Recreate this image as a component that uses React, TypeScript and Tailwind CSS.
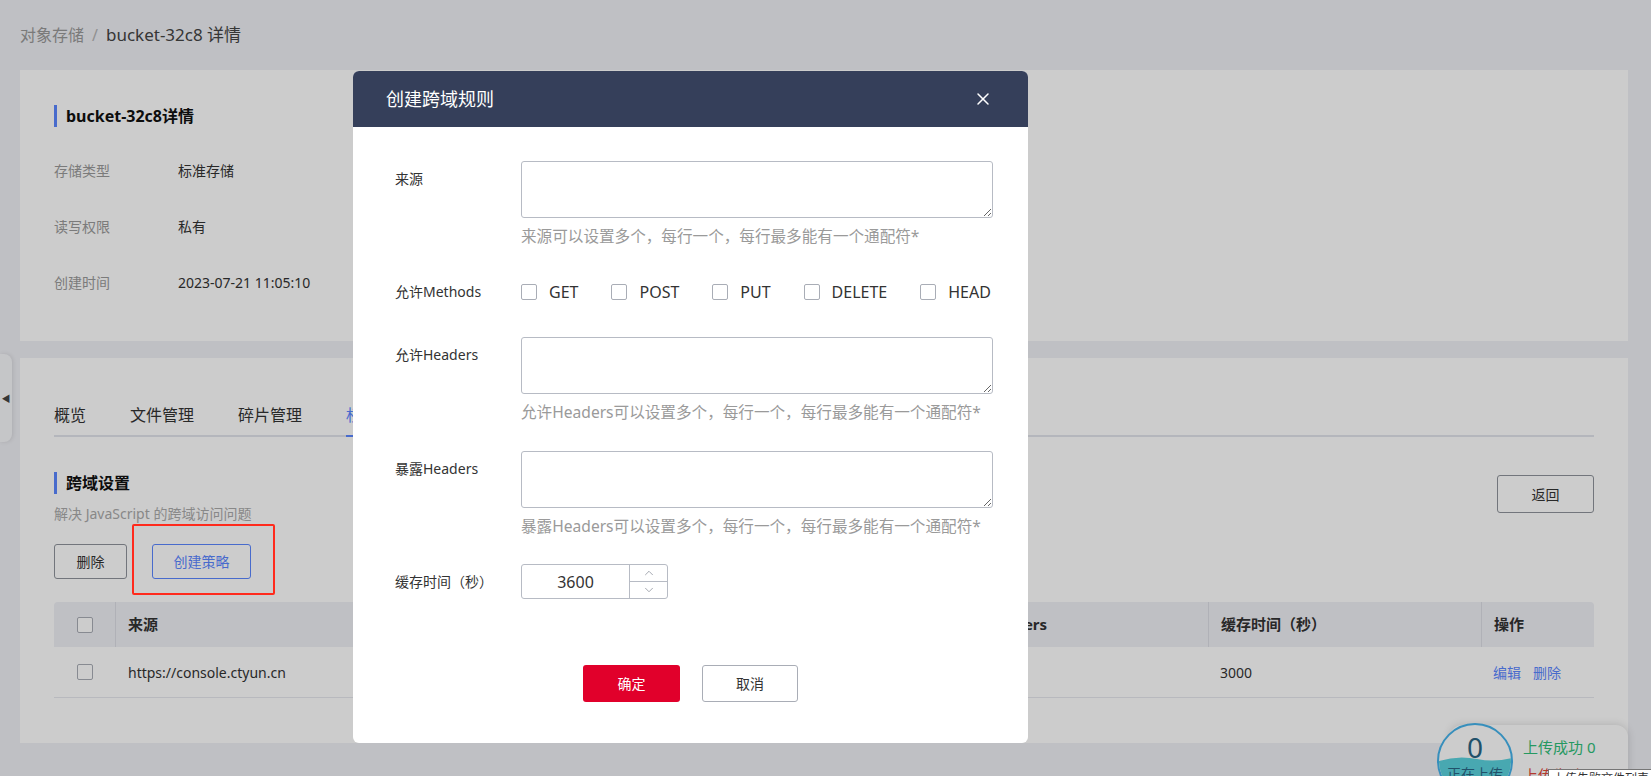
import { X, ChevronUp, ChevronDown } from "lucide-react"

const tabs = ["概览", "文件管理", "碎片管理", "权限管理"]

const infoRows = [
  { label: "存储类型", value: "标准存储" },
  { label: "读写权限", value: "私有" },
  { label: "创建时间", value: "2023-07-21 11:05:10" },
]

const methods = ["GET", "POST", "PUT", "DELETE", "HEAD"]

const columns = "grid grid-cols-[62px_275px_275px_277px_265px_273px_113px]"

const Box = () => (
  <span className="block h-4 w-4 shrink-0 rounded-[2px] border border-[#a9adb6] bg-white" />
)

const SectionTitle = ({ children }: { children: React.ReactNode }) => (
  <div className="flex h-[22px] items-center">
    <span className="h-[22px] w-[3px] bg-[#5b86ff]" />
    <span className="ml-[9px] text-[16px] font-bold leading-[22px] text-[#111]">{children}</span>
  </div>
)

const FieldLabel = ({ children, top }: { children: React.ReactNode; top?: boolean }) => (
  <div className={`text-[14px] leading-[20px] text-[#333] ${top ? "pt-[8px]" : ""}`}>{children}</div>
)

const TextField = ({ hint }: { hint: string }) => (
  <div>
    <textarea className="block h-[57px] w-full rounded-[3px] border border-[#b7bbc4] bg-white outline-none" />
    <div className="mt-[7px] text-[15.6px] leading-[22px] text-[#9a9a9a]">{hint}</div>
  </div>
)

const CorsDialog = () => (
  <div className="absolute left-[353px] top-[71px] z-50 w-[675px] overflow-hidden rounded-[6px] bg-white">
    <div className="flex h-[56px] items-center justify-between bg-[#353f5a] pl-[33px] pr-[35px]">
      <span className="text-[18px] text-white">创建跨域规则</span>
      <X size={20} strokeWidth={1.8} className="text-white" />
    </div>

    <div className="grid grid-cols-[126px_1fr] pl-[42px] pr-[35px] pt-[34px]">
      <FieldLabel top>来源</FieldLabel>
      <TextField hint="来源可以设置多个，每行一个，每行最多能有一个通配符*" />

      <div className="mt-[34px] flex h-[22px] items-center">
        <FieldLabel>允许Methods</FieldLabel>
      </div>
      <div className="mt-[34px] flex h-[22px] items-center gap-[33px]">
        {methods.map((m) => (
          <label key={m} className="flex items-center gap-[12px] text-[16px] text-[#333]">
            <Box />
            {m}
          </label>
        ))}
      </div>

      <div className="mt-[34px]">
        <FieldLabel top>允许Headers</FieldLabel>
      </div>
      <div className="mt-[34px]">
        <TextField hint="允许Headers可以设置多个，每行一个，每行最多能有一个通配符*" />
      </div>

      <div className="mt-[28px]">
        <FieldLabel top>暴露Headers</FieldLabel>
      </div>
      <div className="mt-[28px]">
        <TextField hint="暴露Headers可以设置多个，每行一个，每行最多能有一个通配符*" />
      </div>

      <div className="mt-[27px] flex h-[35px] items-center">
        <FieldLabel>缓存时间（秒）</FieldLabel>
      </div>
      <div className="mt-[27px] flex h-[35px] w-[147px] rounded-[3px] border border-[#b7bbc4]">
        <div className="flex flex-1 items-center justify-center text-[16px] text-[#333]">3600</div>
        <div className="flex w-[38px] flex-col border-l border-[#b7bbc4] text-[#8a8f99]">
          <div className="flex flex-1 items-center justify-center border-b border-[#b7bbc4]">
            <ChevronUp size={14} strokeWidth={1.3} />
          </div>
          <div className="flex flex-1 items-center justify-center">
            <ChevronDown size={14} strokeWidth={1.3} />
          </div>
        </div>
      </div>
    </div>

    <div className="mt-[66px] flex justify-center gap-[22px] pb-[41px]">
      <button className="h-[37px] w-[97px] rounded-[3px] bg-[#e1002b] text-[14px] text-white">确定</button>
      <button className="h-[37px] w-[96px] rounded-[3px] border border-[#a9adb6] bg-white text-[14px] text-[#333]">
        取消
      </button>
    </div>
  </div>
)

const UploadWidget = () => (
  <>
    <div className="absolute left-[1450px] top-[725px] h-[80px] w-[178px] rounded-t-[12px] bg-white shadow-[0_0_8px_rgba(0,0,0,0.15)]">
      <div className="pl-[73px] pt-[11px] text-[15px] leading-[22px] text-[#2fc07a]">上传成功 0</div>
      <div className="pl-[73px] pt-[6px] text-[15px] leading-[22px] text-[#e0493a]">上传失败 0</div>
    </div>
    <div className="absolute left-[1437px] top-[723px] h-[76px] w-[76px] overflow-hidden rounded-full border-2 border-[#45b3ec] bg-white">
      <div className="pt-[5px] text-center text-[28px] leading-[34px] text-[#2a6685]">0</div>
      <svg className="absolute left-0 top-[30px]" width="76" height="50" viewBox="0 0 76 50">
        <path d="M0 6 Q19 0 38 4 T76 2 V50 H0 Z" fill="#5ad3de" />
      </svg>
      <div className="absolute left-0 top-[38px] w-full text-center text-[14px] text-[#2a6685]">正在上传</div>
    </div>
  </>
)

export default function App() {
  return (
    <div className="relative h-screen w-full overflow-hidden bg-[#eff0f5] font-['Noto_Sans','Noto_Sans_CJK_SC',sans-serif] text-[#333]">
      <div className="flex h-[70px] items-center pl-5 text-[16px]">
        <span className="text-[#999]">对象存储</span>
        <span className="mx-[8px] text-[#b5b5b5]">/</span>
        <span className="text-[17px] text-[#444]">bucket-32c8 详情</span>
      </div>

      <div className="ml-5 mr-[23px] h-[271px] bg-white pl-[34px] pt-[35px]">
        <SectionTitle>bucket-32c8详情</SectionTitle>
        <div className="mt-[15px]">
          {infoRows.map((row) => (
            <div key={row.label} className="flex h-[56px] items-center text-[14px]">
              <span className="w-[124px] text-[#9a9a9a]">{row.label}</span>
              <span className="text-[#333]">{row.value}</span>
            </div>
          ))}
        </div>
      </div>

      <div className="ml-5 mr-[23px] mt-[17px] h-[385px] bg-white px-[34px] pt-[37px]">
        <div className="flex gap-[44px] border-b-2 border-[#e2e4eb]">
          {tabs.map((t, i) => (
            <div
              key={t}
              className={`relative flex h-[40px] items-center text-[16px] ${i === 3 ? "text-[#5b86ff]" : "text-[#333]"}`}
            >
              {t}
              {i === 3 && <span className="absolute -bottom-[2px] left-0 h-[2px] w-full bg-[#5b86ff]" />}
            </div>
          ))}
        </div>

        <div className="flex justify-between">
          <div className="pt-[35px]">
            <SectionTitle>跨域设置</SectionTitle>
            <div className="mt-[10px] text-[14px] leading-[20px] text-[#ababab]">解决 JavaScript 的跨域访问问题</div>
            <div className="mt-[20px] flex gap-[25px]">
              <button className="h-[35px] w-[73px] rounded-[3px] border border-[#8f939b] text-[14px] text-[#333]">删除</button>
              <div className="relative">
                <button className="h-[35px] w-[99px] rounded-[3px] border border-[#5b86ff] text-[14px] text-[#5b86ff]">
                  创建策略
                </button>
                <span className="absolute -bottom-[16px] -left-[20px] -right-[24px] -top-[20px] z-50 rounded-[2px] border-[2.5px] border-[#ff2a1c]" />
              </div>
            </div>
          </div>
          <button className="mt-[38px] h-[38px] w-[97px] rounded-[3px] border border-[#8f939b] text-[14px] text-[#333]">返回</button>
        </div>

        <div className="mt-[23px]">
          <div className={`${columns} h-[45px] items-center rounded-t-[4px] bg-[#eff0f6] text-[15px] font-bold text-[#333]`}>
            <div className="flex h-full items-center justify-center border-r border-[#dcdee5]">
              <Box />
            </div>
            <div className="pl-3">来源</div>
            <div className="pl-3">允许Methods</div>
            <div className="pl-3">允许Headers</div>
            <div className="pl-3">暴露Headers</div>
            <div className="flex h-full items-center border-l border-[#dcdee5] pl-3">缓存时间（秒）</div>
            <div className="flex h-full items-center border-l border-[#dcdee5] pl-3">操作</div>
          </div>
          <div className={`${columns} h-[51px] items-center border-b border-[#e6e8ee] text-[14px] text-[#333]`}>
            <div className="flex justify-center">
              <Box />
            </div>
            <div className="pl-3">https://console.ctyun.cn</div>
            <div className="pl-3">GET</div>
            <div className="pl-3">*</div>
            <div className="pl-3">ETag</div>
            <div className="pl-3">3000</div>
            <div className="flex gap-3 pl-3 text-[#5b86ff]">
              <span>编辑</span>
              <span>删除</span>
            </div>
          </div>
        </div>
      </div>

      <div className="absolute left-0 top-[354px] flex h-[88px] w-[12px] items-center justify-center rounded-r-[8px] bg-[#f7f8fb] shadow-[1px_0_4px_rgba(0,0,0,0.1)]">
        <span className="text-[9px] leading-none text-[#444]">◀</span>
      </div>

      <UploadWidget />

      <div className="absolute inset-0 z-40 bg-black/20" />

      <CorsDialog />

      <div className="absolute left-[1548px] top-[769px] z-50 h-[20px] w-[110px] border border-[#767676] bg-white px-1 text-[12px] leading-[18px] text-[#333]">
        上传失败文件列表
      </div>
    </div>
  )
}
